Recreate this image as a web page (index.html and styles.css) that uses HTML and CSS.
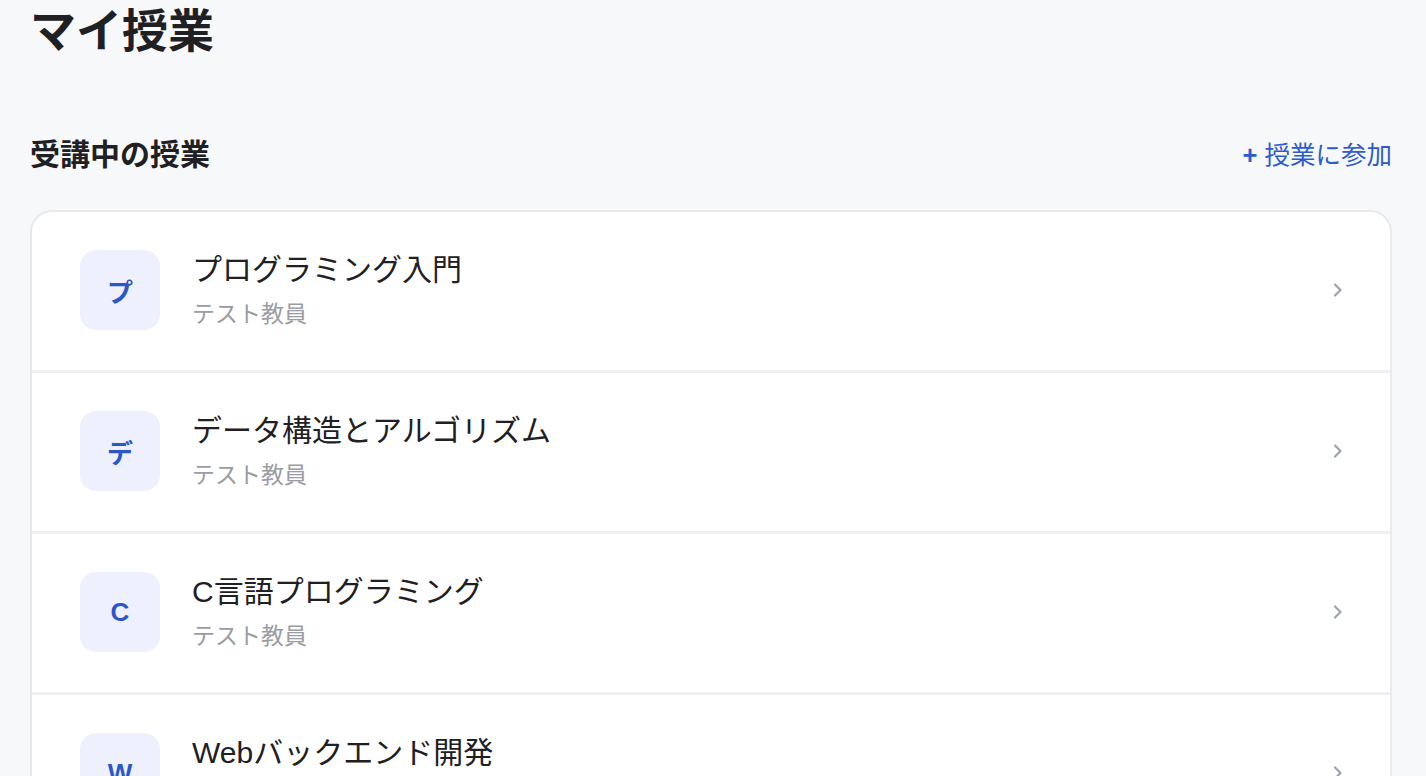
FILE: index.html
```html
<!DOCTYPE html>
<html lang="ja">
<head>
    <meta charset="UTF-8">
    <meta name="viewport" content="width=device-width, initial-scale=1.0">
    <title>マイ授業</title>
    <link rel="stylesheet" href="styles.css">
</head>
<body>
    <div class="page">
        <h1 class="page-title">マイ授業</h1>

        <div class="section-head">
            <h2>受講中の授業</h2>
            <a href="#" class="join-link"><span class="plus">+</span> 授業に参加</a>
        </div>

        <div class="course-list">
            <a href="#" class="course">
                <div class="course-icon">プ</div>
                <div class="course-info">
                    <div class="course-name">プログラミング入門</div>
                    <div class="course-teacher">テスト教員</div>
                </div>
                <svg class="chevron" width="10" height="14" viewBox="0 0 10 14"><polyline points="2,1.5 7.5,7 2,12.5" /></svg>
            </a>
            <a href="#" class="course">
                <div class="course-icon">デ</div>
                <div class="course-info">
                    <div class="course-name">データ構造とアルゴリズム</div>
                    <div class="course-teacher">テスト教員</div>
                </div>
                <svg class="chevron" width="10" height="14" viewBox="0 0 10 14"><polyline points="2,1.5 7.5,7 2,12.5" /></svg>
            </a>
            <a href="#" class="course">
                <div class="course-icon">C</div>
                <div class="course-info">
                    <div class="course-name">C言語プログラミング</div>
                    <div class="course-teacher">テスト教員</div>
                </div>
                <svg class="chevron" width="10" height="14" viewBox="0 0 10 14"><polyline points="2,1.5 7.5,7 2,12.5" /></svg>
            </a>
            <a href="#" class="course">
                <div class="course-icon">W</div>
                <div class="course-info">
                    <div class="course-name">Webバックエンド開発</div>
                    <div class="course-teacher">テスト教員</div>
                </div>
                <svg class="chevron" width="10" height="14" viewBox="0 0 10 14"><polyline points="2,1.5 7.5,7 2,12.5" /></svg>
            </a>
        </div>
    </div>
</body>
</html>
```

FILE: styles.css
```css
body {
    margin: 0;
    padding: 0;
    background-color: #f7f8fa;
    font-family: "Liberation Sans", "Noto Sans CJK JP", sans-serif;
    color: #1f2023;
}

.page {
    padding: 4px 34px 40px 30px;
}

.page-title {
    margin: 0;
    font-size: 46px;
    line-height: 55px;
    font-weight: 700;
}

.section-head {
    display: flex;
    align-items: center;
    justify-content: space-between;
    margin-top: 76px;
    height: 40px;
}

.section-head h2 {
    margin: 0;
    font-size: 30px;
    font-weight: 700;
    line-height: 40px;
}

.join-link {
    color: #2d5bcf;
    text-decoration: none;
    font-size: 25.5px;
    line-height: 40px;
}

.join-link .plus {
    font-weight: 700;
}

.course-list {
    margin-top: 35px;
    background-color: #fff;
    border: 2px solid #e8e9ed;
    border-radius: 22px;
    overflow: hidden;
}

.course {
    display: flex;
    align-items: center;
    padding: 38px 47px 40px 48px;
    border-bottom: 3px solid #eff0f3;
    text-decoration: none;
    color: inherit;
}

.course-icon {
    width: 80px;
    height: 80px;
    flex-shrink: 0;
    display: flex;
    align-items: center;
    justify-content: center;
    background-color: #eef1fd;
    border-radius: 16px;
    color: #2b57c9;
    font-size: 26px;
    font-weight: 700;
}

.course-info {
    flex: 1;
    margin-left: 32px;
}

.course-name {
    font-size: 30px;
    line-height: 40px;
    color: #1f2023;
}

.course-teacher {
    margin-top: 8px;
    font-size: 23px;
    line-height: 32px;
    color: #9a9ca3;
}

.chevron {
    fill: none;
    stroke: #9ca3af;
    stroke-width: 2.2;
    stroke-linecap: round;
    stroke-linejoin: round;
}
```
